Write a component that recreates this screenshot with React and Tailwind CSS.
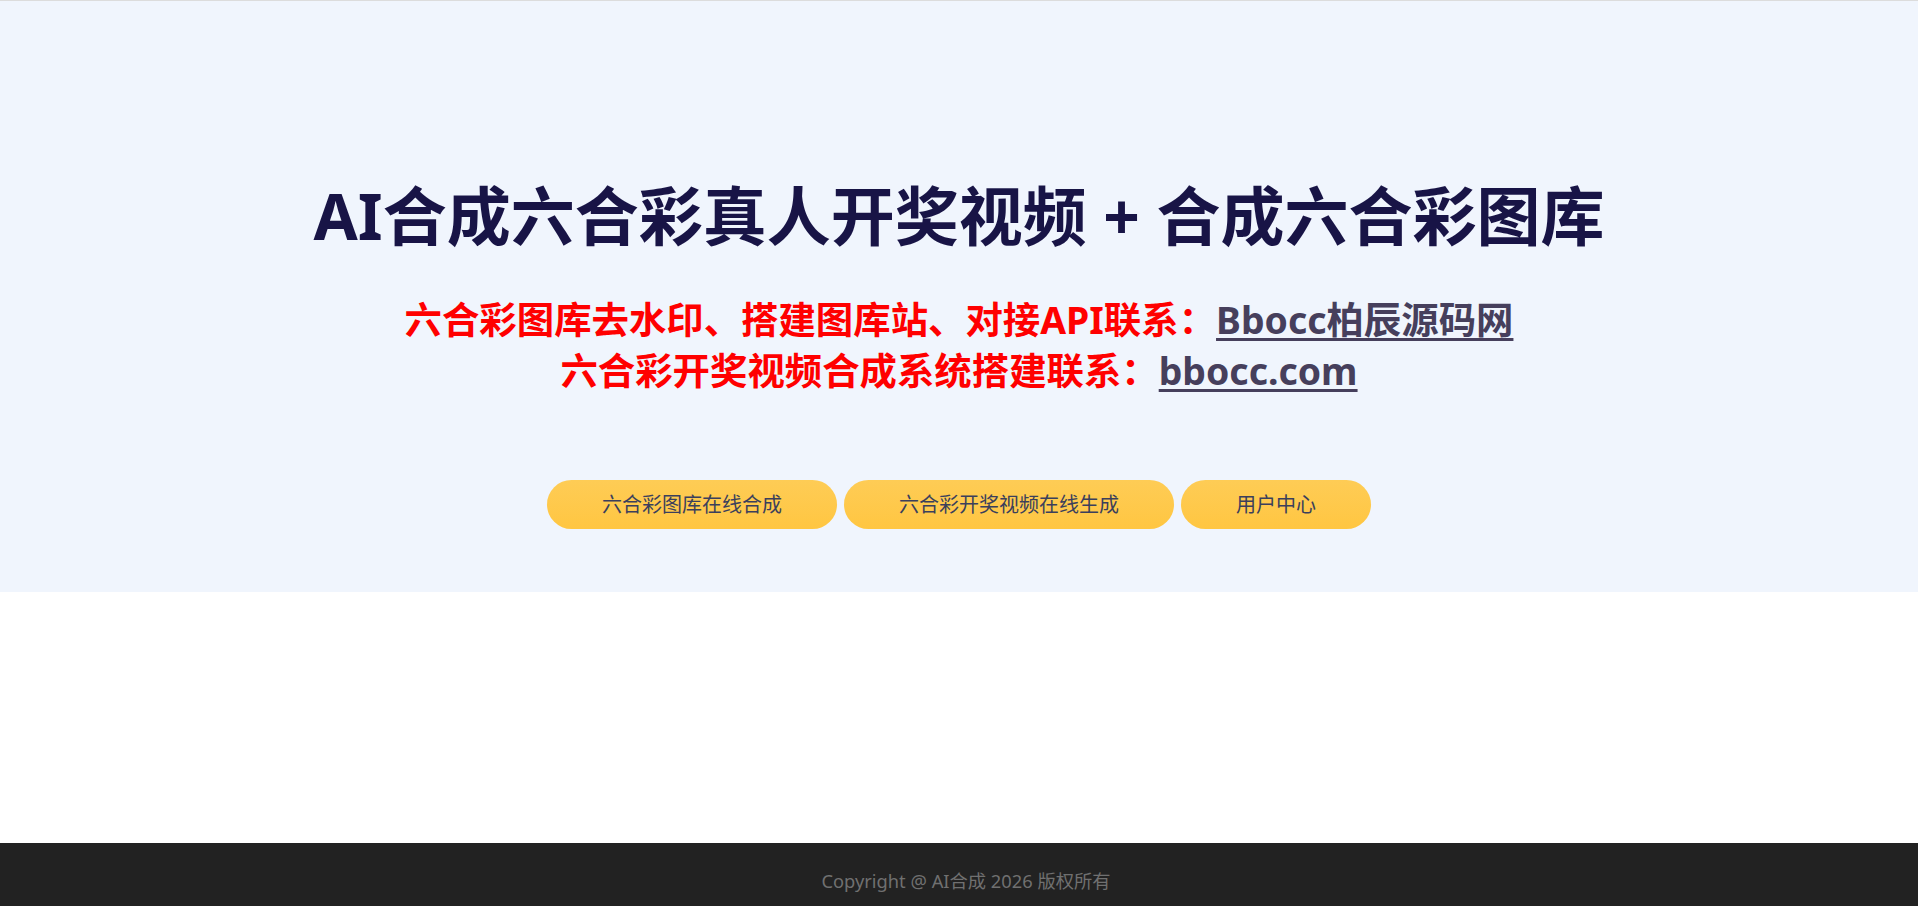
import React from "react";

const buttons = ["六合彩图库在线合成", "六合彩开奖视频在线生成", "用户中心"];

const App = () => {
  return (
    <div
      className="min-h-[906px] flex flex-col bg-white border-t border-[#dcdcdc]"
      style={{ fontFamily: '"Noto Sans", "Noto Sans CJK SC", sans-serif' }}
    >
      {/* Hero */}
      <section className="bg-[#f0f5fd] pt-[176px] pb-[63px] text-center">
        <h1 className="text-[64px] leading-[77px] font-bold text-[#181446]">
          AI合成六合彩真人开奖视频 + 合成六合彩图库
        </h1>

        <div className="mt-[40px] text-[37.4px] leading-[51px] font-bold text-[#ff0000]">
          <p>
            六合彩图库去水印、搭建图库站、对接API联系：
            <a href="#" className="text-[#463f5c] underline underline-offset-4">
              Bbocc柏辰源码网
            </a>
          </p>
          <p>
            六合彩开奖视频合成系统搭建联系：
            <a href="#" className="text-[#463f5c] underline underline-offset-4">
              bbocc.com
            </a>
          </p>
        </div>

        <div className="mt-[84px] flex justify-center gap-[7px]">
          {buttons.map((label) => (
            <a
              key={label}
              href="#"
              className="h-[49px] px-[55px] flex items-center rounded-full bg-gradient-to-b from-[#fecc55] to-[#ffc641] text-[20px] text-[#3b3f5c]"
            >
              {label}
            </a>
          ))}
        </div>
      </section>

      <div className="flex-1" />

      {/* Footer */}
      <footer className="h-[63px] bg-[#222222] pt-[26px] pl-[14px] text-center text-[18.3px] leading-[24px] text-[#707070]">
        Copyright @ AI合成 2026 版权所有
      </footer>
    </div>
  );
};

export default App;
